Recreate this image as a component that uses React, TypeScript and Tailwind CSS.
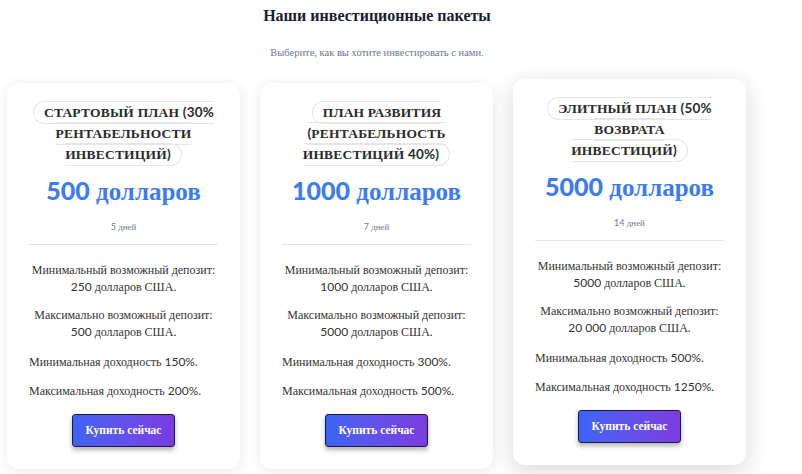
import React from "react";

const serif = { fontFamily: '"Liberation Serif", "Times New Roman", serif' };

// цифры и латиница идут другим шрифтом, как в оригинале
function Mixed({ text }: { text: string }) {
  const parts = text.split(/([0-9%().:,]+(?: [0-9%().:,]+)*)/);
  return (
    <>
      {parts.map((p, i) =>
        /[0-9%().:,]/.test(p) ? (
          <span key={i} className="font-['Lato',sans-serif] leading-none">
            {p}
          </span>
        ) : (
          <React.Fragment key={i}>{p}</React.Fragment>
        )
      )}
    </>
  );
}

type Plan = {
  title: string;
  price: string;
  days: string;
  minDep: string;
  maxDep: string;
  minYield: string;
  maxYield: string;
  featured?: boolean;
};

const plans: Plan[] = [
  {
    title: "Стартовый план (30% рентабельности инвестиций)",
    price: "500",
    days: "5 дней",
    minDep: "250 долларов США.",
    maxDep: "500 долларов США.",
    minYield: "Минимальная доходность 150%.",
    maxYield: "Максимальная доходность 200%.",
  },
  {
    title: "План развития (рентабельность инвестиций 40%)",
    price: "1000",
    days: "7 дней",
    minDep: "1000 долларов США.",
    maxDep: "5000 долларов США.",
    minYield: "Минимальная доходность 300%.",
    maxYield: "Максимальная доходность 500%.",
  },
  {
    title: "Элитный план (50% возврата инвестиций)",
    price: "5000",
    days: "14 дней",
    minDep: "5000 долларов США.",
    maxDep: "20 000 долларов США.",
    minYield: "Минимальная доходность 500%.",
    maxYield: "Максимальная доходность 1250%.",
    featured: true,
  },
];

function PlanCard({ plan }: { plan: Plan }) {
  return (
    <div
      className={
        "w-[233px] h-[386px] shrink-0 rounded-xl bg-white px-[22px] pt-[19px] " +
        (plan.featured
          ? "-translate-y-1 shadow-[0_6px_24px_rgba(0,0,0,0.16)]"
          : "shadow-[0_2px_14px_rgba(0,0,0,0.09)]")
      }
    >
      <h3 className="text-center text-[13.5px] font-bold uppercase leading-[21px] tracking-[0.2px] text-[#2b2b2b]">
        <span className="rounded-full border border-[#e6e6ea] px-[10px] py-[3px]">
          <Mixed text={plan.title} />
        </span>
      </h3>
      <div className="mt-[10px] text-center text-[25px] font-bold leading-[30px] text-[#3c7bf2]">
        <span className="font-['Lato',sans-serif] font-black">{plan.price}</span> долларов
      </div>
      <div className="mt-[14px] text-center text-[9px] leading-[12px] text-[#737a91]">
        <Mixed text={plan.days} />
      </div>
      <hr className="mx-0 mt-[11px] border-t border-[#e4e5ea]" />
      <div className="mt-[17px] text-[12px] leading-[17px] text-[#333]">
        <p className="text-center">
          Минимальный возможный депозит:
          <br />
          <Mixed text={plan.minDep} />
        </p>
        <p className="mt-[11px] text-center">
          Максимально возможный депозит:
          <br />
          <Mixed text={plan.maxDep} />
        </p>
        <p className="mt-[13px]">
          <Mixed text={plan.minYield} />
        </p>
        <p className="mt-[12px]">
          <Mixed text={plan.maxYield} />
        </p>
      </div>
      <div className="mt-[14px] flex justify-center">
        <button className="h-[33px] w-[103px] rounded-[3px] border border-[#1c1c3a] bg-gradient-to-r from-[#3b63f6] to-[#7a3be0] text-[11.5px] font-bold text-white shadow-[0_3px_5px_rgba(0,0,0,0.3)]">
          Купить сейчас
        </button>
      </div>
    </div>
  );
}

export default function App() {
  return (
    <div className="min-h-screen w-[802px] bg-white" style={serif}>
      <div className="w-[754px] pt-[5px]">
        <h1 className="text-center text-[16px] font-bold leading-[22px] text-[#1c1c30]">
          Наши инвестиционные пакеты
        </h1>
        <p className="mt-[19px] text-center text-[10.5px] leading-[14px] text-[#6e7591]">
          Выберите, как вы хотите инвестировать с нами.
        </p>
        <div className="mt-[23px] flex gap-5 pl-[7px]">
          {plans.map((p) => (
            <PlanCard key={p.price} plan={p} />
          ))}
        </div>
      </div>
    </div>
  );
}
